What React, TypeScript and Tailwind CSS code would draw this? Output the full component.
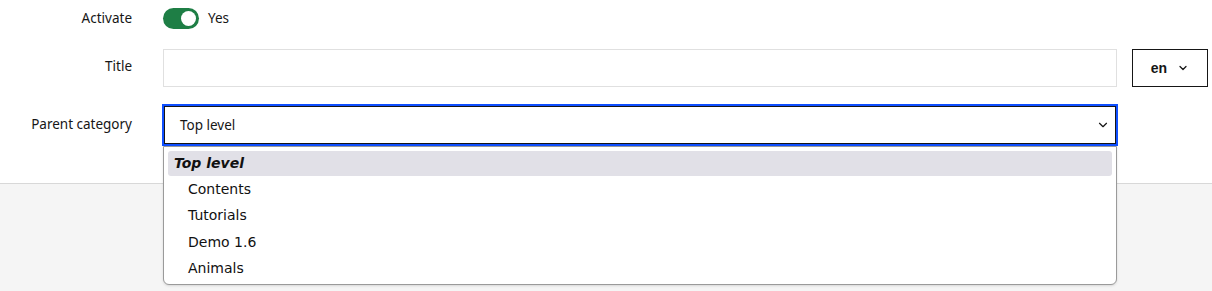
import { ChevronDown } from "lucide-react";

const options = ["Contents", "Tutorials", "Demo 1.6", "Animals"];

export default function App() {
  return (
    <div className="min-h-screen bg-[#f5f5f5] font-['Noto_Sans',sans-serif] text-[#161616]">
      <div className="bg-white border-b border-[#d8d8d8] pt-[8px] pb-[37px]">
        {/* Activate */}
        <div className="flex items-center h-[21px]">
          <div className="w-[132px] text-right text-[13.5px]">Activate</div>
          <div className="ml-[31px] flex items-center gap-[9px]">
            <div className="w-[36px] h-[21px] rounded-full bg-[#1e7e45] relative">
              <div className="absolute right-[3px] top-[3px] w-[15px] h-[15px] rounded-full bg-white" />
            </div>
            <span className="text-[13.5px]">Yes</span>
          </div>
        </div>

        {/* Title */}
        <div className="flex items-center h-[38px] mt-[20px]">
          <div className="w-[132px] text-right text-[13.5px] -mt-[3px]">Title</div>
          <div className="ml-[31px] w-[954px] h-[38px] border border-[#e0e0e0] bg-white" />
          <button className="ml-[15px] w-[76px] h-[38px] border border-[#161616] flex items-center justify-center gap-[10px] font-['Liberation_Sans',sans-serif] text-[14px] font-bold">
            en
            <ChevronDown size={12} strokeWidth={2.5} />
          </button>
        </div>

        {/* Parent category */}
        <div className="flex items-center h-[42px] mt-[17px]">
          <div className="w-[132px] text-right text-[13.5px] -mt-[2px]">Parent category</div>
          <div className="ml-[30px] relative w-[956px] h-[42px]">
            <div className="w-full h-full border-2 border-[#0f4fff]">
              <div className="w-full h-full border border-[#161616] flex items-center justify-between pl-[15px] pr-[5px]">
                <span className="text-[13.5px]">Top level</span>
                <ChevronDown size={14} strokeWidth={2} />
              </div>
            </div>

            {/* dropdown */}
            <div className="absolute left-px top-[42px] w-[954px] h-[139px] bg-white border border-[#9a9a9a] rounded-b-[6px] shadow-sm font-['DejaVu_Sans',sans-serif] text-[14px] text-[#111] px-[4px] pt-[4px] z-10">
              <div className="h-[25px] rounded-[3px] bg-[#e1e0e7] flex items-center pl-[6px] font-bold italic">
                Top level
              </div>
              <div className="flex flex-col">
                {options.map((o) => (
                  <div key={o} className="h-[26.5px] flex items-center pl-[20px]">
                    {o}
                  </div>
                ))}
              </div>
            </div>
          </div>
        </div>
      </div>
    </div>
  );
}
